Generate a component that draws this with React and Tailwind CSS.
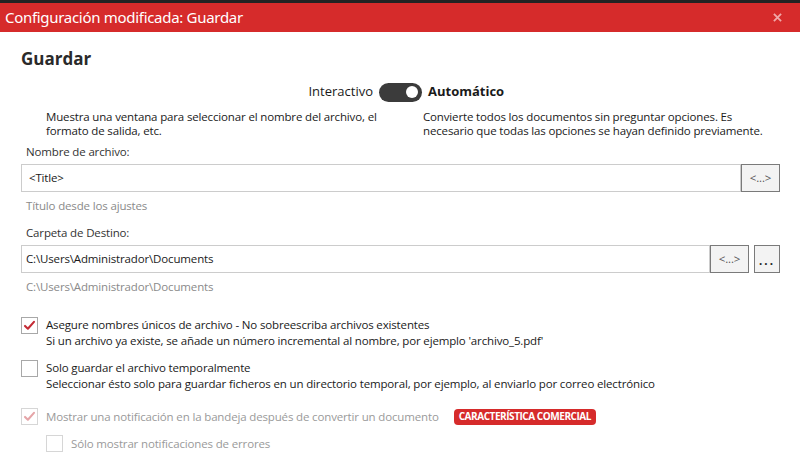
import React from "react";

const font = { fontFamily: '"Open Sans", "Noto Sans", sans-serif' };

function Check({ checked, disabled }) {
  return (
    <div
      className={`w-[17px] h-[17px] shrink-0 border flex items-center justify-center bg-white ${
        disabled ? "border-[#d6d6d6]" : "border-[#a8a8a8]"
      }`}
    >
      {checked && (
        <svg viewBox="0 0 16 16" className="w-[13px] h-[13px]">
          <path
            d="M2.5 8.5 L6 12 L13.5 3.5"
            fill="none"
            stroke={disabled ? "#e5a5a8" : "#c42b35"}
            strokeWidth="2.6"
            strokeLinecap="round"
            strokeLinejoin="round"
          />
        </svg>
      )}
    </div>
  );
}

function Btn({ children, className = "" }) {
  return (
    <div
      className={`h-[28px] border border-[#7a7a7a] bg-[#f3f3f3] flex items-center justify-center text-[11.5px] shrink-0 ${className}`}
    >
      {children}
    </div>
  );
}

export default function App() {
  return (
    <div
      className="w-[800px] h-[455px] bg-white overflow-hidden flex flex-col text-[11.5px] tracking-[-0.15px] text-[#1a1a1a]"
      style={font}
    >
      <div className="h-[3px] shrink-0 bg-[#232323]" />
      <div className="h-[29px] shrink-0 bg-[#d62b2b] flex items-center justify-between pl-[5px] pr-[18px]">
        <span
          className="text-[15px] text-white tracking-[-0.3px]"
          style={{ fontFamily: '"Noto Sans", sans-serif' }}
        >
          Configuración modificada: Guardar
        </span>
        <svg viewBox="0 0 10 10" className="w-[9px] h-[9px]">
          <path d="M1 1 L9 9 M9 1 L1 9" stroke="#f0a8a8" strokeWidth="2" />
        </svg>
      </div>

      <div className="flex-1 pl-[21px] pr-[20px]">
        <h1 className="text-[17px] font-bold tracking-normal text-[#2a2a2a] mt-[16px] leading-[22px]">
          Guardar
        </h1>

        <div className="flex items-center mt-[12px] h-[20px] tracking-normal">
          <div className="flex-1 flex justify-end pr-[6px] text-[13px]">Interactivo</div>
          <div className="w-[43px] h-[19px] rounded-full bg-[#3b3b3b] flex items-center justify-end pr-[4px]">
            <div className="w-[12px] h-[12px] rounded-full bg-white" />
          </div>
          <div className="flex-1 pl-[6px] text-[13px] font-bold">Automático</div>
        </div>

        <div className="flex mt-[8px] leading-[14px]">
          <div className="w-[402px] pl-[25px] pr-[10px]">
            Muestra una ventana para seleccionar el nombre del archivo, el formato de salida, etc.
          </div>
          <div className="flex-1">
            Convierte todos los documentos sin preguntar opciones. Es necesario que todas las opciones se hayan definido previamente.
          </div>
        </div>

        <div className="mt-[5px] pl-[5px] text-[#333] leading-[18px]">Nombre de archivo:</div>
        <div className="flex mt-[3px]">
          <div className="flex-1 h-[28px] border border-[#cccccc] flex items-center pl-[7px]">
            &lt;Title&gt;
          </div>
          <Btn className="w-[39px] text-[#555]">&lt;...&gt;</Btn>
        </div>
        <div className="text-[#8a8a8a] pl-[5px] mt-[5px] leading-[18px]">Título desde los ajustes</div>

        <div className="mt-[9px] pl-[5px] text-[#333] leading-[18px]">Carpeta de Destino:</div>
        <div className="flex mt-[3px]">
          <div className="flex-1 h-[28px] border border-[#cccccc] flex items-center pl-[4px]">
            C:\Users\Administrador\Documents
          </div>
          <Btn className="w-[39px] text-[#555]">&lt;...&gt;</Btn>
          <Btn className="w-[26px] ml-[5px] tracking-[2px] font-bold text-[#222] pt-[3px]">...</Btn>
        </div>
        <div className="text-[#8a8a8a] pl-[5px] mt-[5px] leading-[18px]">C:\Users\Administrador\Documents</div>

        <div className="flex mt-[21px] gap-[8px]">
          <Check checked />
          <div className="leading-[16px]">
            <div>Asegure nombres únicos de archivo - No sobreescriba archivos existentes</div>
            <div>Si un archivo ya existe, se añade un número incremental al nombre, por ejemplo 'archivo_5.pdf'</div>
          </div>
        </div>

        <div className="flex mt-[11px] gap-[8px]">
          <Check />
          <div className="leading-[16px]">
            <div>Solo guardar el archivo temporalmente</div>
            <div>Seleccionar ésto solo para guardar ficheros en un directorio temporal, por ejemplo, al enviarlo por correo electrónico</div>
          </div>
        </div>

        <div className="flex mt-[16px] gap-[8px] items-center">
          <Check checked disabled />
          <div className="text-[#9a9a9a] leading-[16px]">
            Mostrar una notificación en la bandeja después de convertir un documento
          </div>
          <span className="ml-[7px] bg-[#d62b2b] text-white text-[10px] font-bold tracking-[-0.45px] rounded-[4px] px-[5px] h-[16px] flex items-center">
            CARACTERÍSTICA COMERCIAL
          </span>
        </div>

        <div className="flex mt-[10px] gap-[8px] items-center pl-[25px]">
          <Check disabled />
          <div className="text-[#9a9a9a] leading-[16px]">Sólo mostrar notificaciones de errores</div>
        </div>
      </div>
    </div>
  );
}
